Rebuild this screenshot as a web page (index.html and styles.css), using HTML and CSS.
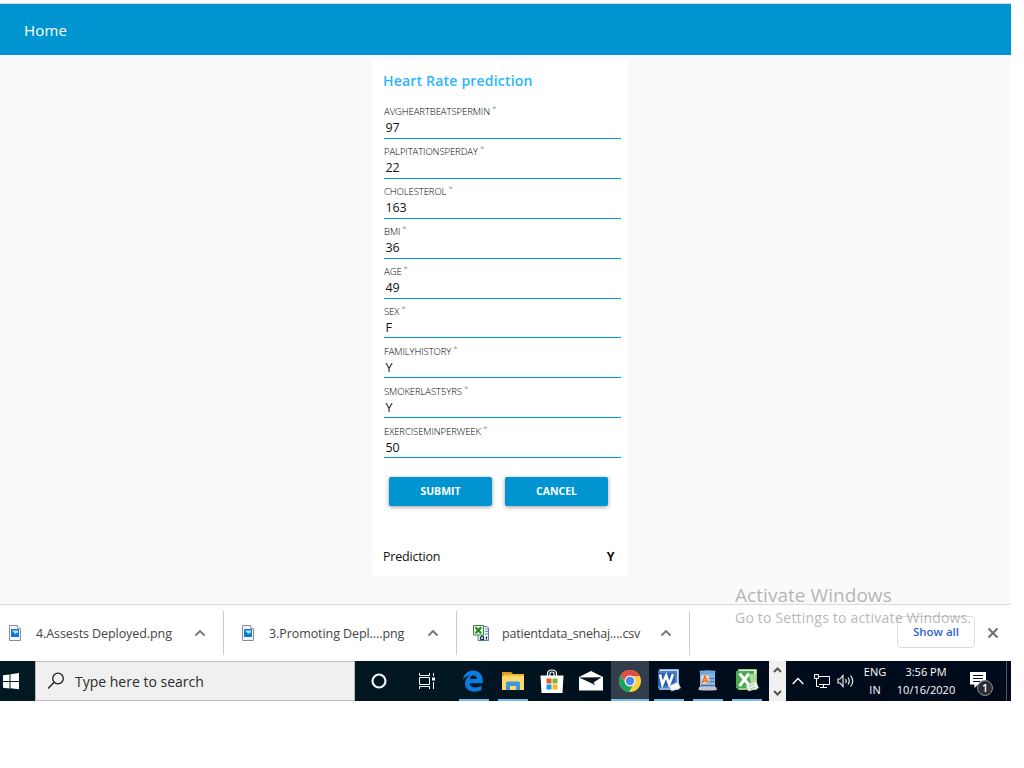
FILE: index.html
```html
<!DOCTYPE html>
<html lang="en">
<head>
<meta charset="utf-8">
<title>Heart Rate prediction</title>
<link rel="stylesheet" href="styles.css">
</head>
<body>
<div class="desktop">
  <header class="topbar"><a class="home">Home</a></header>
  <main class="page">
    <form class="card">
      <h1 class="title">Heart Rate prediction</h1>
      <div class="field"><label class="label">AVGHEARTBEATSPERMIN</label><span class="req">*</span><div class="value">97</div></div>
      <div class="field"><label class="label">PALPITATIONSPERDAY</label><span class="req">*</span><div class="value">22</div></div>
      <div class="field"><label class="label">CHOLESTEROL</label><span class="req">*</span><div class="value">163</div></div>
      <div class="field"><label class="label">BMI</label><span class="req">*</span><div class="value">36</div></div>
      <div class="field"><label class="label">AGE</label><span class="req">*</span><div class="value">49</div></div>
      <div class="field short"><label class="label">SEX</label><span class="req">*</span><div class="value">F</div></div>
      <div class="field short"><label class="label">FAMILYHISTORY</label><span class="req">*</span><div class="value">Y</div></div>
      <div class="field short"><label class="label">SMOKERLAST5YRS</label><span class="req">*</span><div class="value">Y</div></div>
      <div class="field short"><label class="label">EXERCISEMINPERWEEK</label><span class="req">*</span><div class="value">50</div></div>
      <div class="actions"><button type="button" class="btn">SUBMIT</button><button type="button" class="btn">CANCEL</button></div>
      <div class="result"><span class="result-name">Prediction</span><strong class="answer">Y</strong></div>
    </form>
  </main>
  <section class="shelf">
    <div class="download first">
      <svg class="file" width="16" height="18" viewBox="0 0 16 18"><path d="M2.500 1.500h8l3 3v12h-11z" fill="#f4f4f4" stroke="#8d8d8d"/><path d="M10.500 1.500v3h3" fill="#fff" stroke="#a5a5a5"/><path d="M4 5h8v8H4z" fill="#0f7bd8"/><path d="M5 6.500h6v3L9.500 8.500 8.500 10 6.500 8z" fill="#c5e1f8"/></svg>
      <span class="name">4.Assests Deployed.png</span>
      <svg class="chev" width="12" height="8" viewBox="0 0 12 8"><path d="M1.500 6.500L6 2l4.500 4.500" fill="none" stroke="#757575" stroke-width="1.800"/></svg>
    </div>
    <div class="download">
      <svg class="file" width="16" height="18" viewBox="0 0 16 18"><path d="M2.500 1.500h8l3 3v12h-11z" fill="#f4f4f4" stroke="#8d8d8d"/><path d="M10.500 1.500v3h3" fill="#fff" stroke="#a5a5a5"/><path d="M4 5h8v8H4z" fill="#0f7bd8"/><path d="M5 6.500h6v3L9.500 8.500 8.500 10 6.500 8z" fill="#c5e1f8"/></svg>
      <span class="name">3.Promoting Depl....png</span>
      <svg class="chev" width="12" height="8" viewBox="0 0 12 8"><path d="M1.500 6.500L6 2l4.500 4.500" fill="none" stroke="#757575" stroke-width="1.800"/></svg>
    </div>
    <div class="download">
      <svg class="file" width="16" height="17" viewBox="0 0 16 17"><path d="M5 1.500h9l1.500 1.500v12.500H5z" fill="#eef4fb" stroke="#5b7fa6"/><path d="M12 4h3M12 6.500h3M12 9h3" stroke="#6d92b8"/><path d="M.5 .5h10v9.500H.5z" fill="#e9f8e4" stroke="#2f8b2d"/><path d="M2.500 2.200l5.500 6M8.200 2.200l-5.700 6" stroke="#218324" stroke-width="2"/><path d="M7.500 12.500c1.500-2 3-2 3 .3v1.700c-2 .5-3.500 0-3-1.300zM13.500 11.500v3" fill="none" stroke="#17304f" stroke-width="1.300"/></svg>
      <span class="name csv">patientdata_snehaj....csv</span>
      <svg class="chev" width="12" height="8" viewBox="0 0 12 8"><path d="M1.500 6.500L6 2l4.500 4.500" fill="none" stroke="#757575" stroke-width="1.800"/></svg>
    </div>
    <div class="shelf-end">
      <button type="button" class="show-all">Show all</button>
      <svg width="12" height="12" viewBox="0 0 12 12"><path d="M1.500 1.500l9 9M10.500 1.500l-9 9" stroke="#6b6e72" stroke-width="2"/></svg>
    </div>
  </section>
  <footer class="taskbar">
    <div class="start"><svg width="16" height="17" viewBox="0 0 16 17"><path d="M0 2.300l6.500-.9V8H0zM7.500 1.200L16 0v8H7.500zM0 9h6.500v6.500L0 14.700zM7.500 9H16v7.200l-8.500-1z" fill="#fff"/></svg></div>
    <div class="search">
      <svg width="18" height="18" viewBox="0 0 18 18"><circle cx="11" cy="6.500" r="5.300" fill="none" stroke="#222" stroke-width="1.300"/><path d="M7.200 10.300L1 16.500" stroke="#222" stroke-width="1.400"/></svg>
      <span class="search-text">Type here to search</span>
    </div>
    <div class="sys"><svg width="18" height="18" viewBox="0 0 18 18"><circle cx="9" cy="9" r="6.500" fill="none" stroke="#f4f4f4" stroke-width="2.200"/></svg></div>
    <div class="sys"><svg width="18" height="16" viewBox="0 0 18 16"><path d="M1.500 0v2.500h10V0M1.500 16v-2.500h10V16M1.500 4.500h10v7h-10zM15.500 0v3M15.500 9v7" fill="none" stroke="#fff"/><path d="M14 4.500h3v3h-3z" fill="#fff"/></svg></div>
    <div class="apps">
      <div class="app open"><svg class="edge" width="20" height="22" viewBox="0 0 20 22"><path d="M0 10C.6 4.500 4.400.5 10 .5c5.800 0 9.800 4 9.800 9.800v2.900H6.800c.2 2.900 2.700 4.200 5.700 4.200 2.300 0 4.200-.6 6-1.700v4.400c-1.900 1-4.200 1.600-6.900 1.600C5.800 21.700 2 18.500 2 13.500c0-3.500 1.800-6.300 5-7.900C4 5.800 1.500 7.300 0 10zm6.900-.9h7c0-2.400-1-3.700-3.300-3.700-2.100 0-3.400 1.500-3.700 3.700z" fill="#0b7cdd"/></svg></div>
      <div class="app open"><svg width="22" height="19" viewBox="0 0 22 19"><path d="M0 0h9l2 2h11v16H0z" fill="#f3b72f"/><path d="M0 0h9l1 2H2v3H0z" fill="#d99a14"/><path d="M0 4h22v14H0z" fill="#ffd96c"/><path d="M4 18v-7q0-1.500 1.500-1.500h11q1.500 0 1.500 1.500v7h-4v-4H8v4z" fill="#3c97dd"/></svg></div>
      <div class="app"><svg width="24" height="25" viewBox="0 0 24 25"><path d="M7.500 8V5Q7.500 1 12 1t4.500 4v3M10 7V4.500Q10 3 12 3t2 1.500V7" fill="none" stroke="#fff" stroke-width="1.200"/><path d="M.5 6.500h23L22.500 24h-21z" fill="#fff"/><path d="M6.500 9.500h5v5h-5z" fill="#ee5126"/><path d="M12.500 9.500h5v5h-5z" fill="#7cb72c"/><path d="M6.500 15.500h5v5h-5z" fill="#16a0e4"/><path d="M12.500 15.500h5v5h-5z" fill="#fbb61a"/></svg></div>
      <div class="app"><svg width="24" height="20" viewBox="0 0 24 20"><path d="M0 6L12 0l12 6v13.500H0z" fill="#fff"/><path d="M0 6.500l22.500-.2-8 5.200 2 2.800-5.500-2.800z" fill="#031622"/></svg></div>
      <div class="app open active"><svg width="24" height="24" viewBox="0 0 24 24"><circle cx="12" cy="12" r="11" fill="#ffcd40"/><path d="M2.470 6.500A11 11 0 0 0 11 22.950l4.800-8.400L12 12l-4.500 2z" fill="#18a15f"/><path d="M2.470 6.500A11 11 0 0 1 21.800 7H12L8 14z" fill="#dd4f42"/><circle cx="12" cy="12" r="5.500" fill="#f3f3f3"/><circle cx="12" cy="12" r="4.200" fill="#4a86ec"/></svg></div>
      <div class="app open"><svg width="24" height="24" viewBox="0 0 24 24"><path d="M2.500 .5h19v20h-19z" fill="#c6daf2" stroke="#8eb2dc"/><path d="M1 2h19v17.500H1z" fill="#4a80ca"/><path d="M1 4h17v13H1z" fill="#2c62b0"/><path d="M3 5.500l2.400 10L9.200 6.500l3 9L16 5" fill="none" stroke="#fff" stroke-width="2.500"/><path d="M12 17l9-4 2.500 6-9 3z" fill="#f5f7fb" stroke="#b6cbe5" stroke-width=".7"/></svg></div>
      <div class="app open"><svg width="20" height="22" viewBox="0 0 20 22"><path d="M1.500 .8q8-1 16 0L17 4v13H2V4z" fill="#6fa5dc"/><path d="M2 4h15v13H2z" fill="#8db5e2"/><path d="M12 8.500h4M12 11.500h4M3 15.500h13" stroke="#3f6ca5"/><path d="M1 17h17l1 3q-9 1-18.500 0z" fill="#c3c5c9"/><path d="M3.500 5.500h7v8h-7z" fill="#f3dfcf"/><path d="M4.200 13L7 6.500 9.800 13M5.500 11h3" fill="none" stroke="#ed711c" stroke-width="1.700"/></svg></div>
      <div class="app open"><svg width="24" height="24" viewBox="0 0 24 24"><path d="M3.500 .5h18v20h-18z" fill="#dff2d8" stroke="#92ca86"/><path d="M1 2h18v17.500H1z" fill="#4ba952"/><path d="M4.500 4.500L15 17M14 4.500L4.500 17" stroke="#fff" stroke-width="3"/><path d="M14 5h7v10h-5z" fill="#a8d999"/><path d="M11 16.500l10-4 2.500 6.500-10 3z" fill="#f4f9f2" stroke="#bad9b3" stroke-width=".7"/><path d="M13.500 17.500l6-2M14.500 20l6-2" stroke="#9bc392"/></svg></div>
    </div>
    <div class="scroller"><svg width="17" height="40" viewBox="0 0 17 40"><path d="M5 11l3.500-3.500L12 11M5 30l3.500 3.500L12 30" fill="none" stroke="#555" stroke-width="2"/></svg></div>
    <div class="tray">
      <svg class="up" width="12" height="8" viewBox="0 0 12 8"><path d="M.7 7L6 1.500 11.300 7" fill="none" stroke="#fff" stroke-width="1.300"/></svg>
      <svg class="net" width="17" height="14" viewBox="0 0 17 14"><path d="M5 2.500h10.500v8H5M6 13.500h7M9.500 10.500v3M2.500 4.500v8H5" fill="none" stroke="#fff"/><path d="M.5 .5h4v4h-4z" fill="#17202c" stroke="#fff"/></svg>
      <svg class="vol" width="18" height="14" viewBox="0 0 18 14"><path d="M1 5h2l3-3.500v11L3 9H1zM8.500 5q1.500 2 0 4M11 3.500q2.500 3.500 0 7M13.500 1.500q4.500 5.500 0 11" fill="none" stroke="#fff" stroke-width="1.100"/></svg>
      <div class="lang"><span>ENG</span><span>IN</span></div>
      <div class="clock"><span>3:56 PM</span><span>10/16/2020</span></div>
      <div class="notice"><svg width="18" height="18" viewBox="0 0 18 18"><path d="M0 0h16v12.500H8L4.500 16v-3.500H0z" fill="#fff"/><path d="M3 3.500h10M3 6.500h10M3 9.500h7" stroke="#07101d" stroke-width="1.100"/></svg><span class="badge">1</span></div>
      <div class="peek"></div>
    </div>
  </footer>
  <aside class="watermark"><div class="w1">Activate Windows</div><div class="w2">Go to Settings to activate Windows.</div></aside>
</div>
</body>
</html>
```
FILE: styles.css
```css
* { box-sizing: border-box; }
body { margin: 0; background: #fff; font-family: "Open Sans", "Noto Sans", sans-serif; color: #111; }
svg { display: block; flex: none; }
.desktop { position: relative; width: 1011px; height: 701px; padding-top: 3px; display: flex; flex-direction: column; overflow: hidden; }
.topbar { height: 52px; flex: none; background: #0094d0; border-top: 1px solid #cbdce4; padding: 0 24px; display: flex; align-items: center; }
.home { color: #fff; font-size: 15px; letter-spacing: .2px; line-height: 20px; padding-top: 1px; }
.page { height: 549px; flex: none; background: #fafafa; padding-top: 5px; }
.card { width: 256px; height: 516px; margin-left: 372px; background: #fff; padding: 11px 7px 0 11px; }
.title { margin: 0 0 13px; height: 20px; line-height: 20px; font-size: 14px; font-weight: 600; letter-spacing: .2px; color: #29b6ff; white-space: nowrap; }
.field { height: 40px; width: 237px; margin-left: 1px; display: grid; grid-template-columns: max-content 1fr; grid-template-rows: 14px 21px; white-space: nowrap; }
.field.short { grid-template-rows: 14px 20px; }
.label { font-size: 9.500px; line-height: 16px; font-weight: 300; color: #000; letter-spacing: -.08px; }
.req { font-size: 8px; line-height: 11px; color: #999; padding-left: 2px; margin-top: -2px; }
.value { grid-column: 1 / 3; border-bottom: 1px solid #0094d0; font-size: 12.500px; line-height: 19px; padding-left: 1.500px; letter-spacing: -.1px; color: #111; }
.actions { display: flex; gap: 13px; padding: 13px 0 0 6px; }
.btn { width: 103px; height: 29px; padding: 0; border: 0; border-radius: 2px; background: #0094d0; color: #fff; font: 700 10.500px/29px "Open Sans", sans-serif; box-shadow: 0 1px 4px rgba(0, 0, 0, .4); }
.result { display: flex; justify-content: space-between; height: 20px; margin-top: 41px; line-height: 20px; font-size: 12.500px; padding-right: 6.500px; }
.result-name { letter-spacing: -.2px; }
.answer { font-weight: 700; }
.shelf { height: 57px; flex: none; border-top: 1px solid #d9dadd; display: flex; align-items: center; background: #fff; }
.download { width: 233px; height: 44px; border-right: 1px solid #ccc; display: flex; align-items: center; padding-left: 16px; white-space: nowrap; }
.download.first { width: 224px; padding-left: 7px; }
.name { width: 158px; margin-left: 13px; padding-top: 1px; font-size: 12.500px; line-height: 20px; letter-spacing: -.08px; color: #454545; }
.name.csv { letter-spacing: -.18px; }
.chev { flex: none; }
.shelf-end { flex: 1; display: flex; align-items: center; justify-content: flex-end; gap: 12px; padding-right: 12px; }
.show-all { width: 78px; height: 32px; margin-top: -2px; border: 1px solid #d9dce0; border-radius: 4px; background: #fff; color: #2b66d9; font: 600 11.500px/28px "Open Sans", sans-serif; padding: 0; }
.taskbar { height: 40px; flex: none; display: flex; background: linear-gradient(90deg, #001923 0, #001722 45%, #000d1c 65%, #000a1b 100%); }
.start { width: 35px; display: flex; align-items: center; padding-left: 3px; }
.search { width: 320px; background: #f0f0f0; border: 1px solid #bcbcbc; display: flex; align-items: center; gap: 10px; padding-left: 11px; color: #2b2b2b; }
.search-text { font-size: 14px; line-height: 20px; padding-top: 2px; white-space: nowrap; }
.sys { width: 48px; display: flex; align-items: center; justify-content: center; }
.apps { display: flex; width: 318px; padding-left: 3px; }
.app { width: 39px; flex: none; display: flex; align-items: center; justify-content: center; position: relative; }
.app.open::after { content: ""; position: absolute; left: 5px; bottom: 0; width: 30px; height: 2px; background: #76b9ed; }
.edge { margin-right: 1px; }
.app.active { background: #323e4b; margin-left: 1px; width: 38px; }
.app.active::after { left: 0; width: 38px; }
.scroller { width: 17px; background: #f0f0f0; flex: none; }
.tray { flex: 1; display: flex; align-items: center; color: #fff; font-size: 11px; line-height: 18px; white-space: nowrap; }
.up { margin-left: 6px; }
.net { margin-left: 10px; }
.vol { margin-left: 6px; }
.lang, .clock { display: flex; flex-direction: column; align-items: center; }
.lang { width: 26px; margin-left: 7px; }
.clock { width: 64px; margin-left: 6px; }
.notice { position: relative; margin-left: 12px; }
.badge { position: absolute; left: 7px; top: 8px; width: 16px; height: 16px; border: 1px solid #8c9299; border-radius: 50%; background: #2c3036; font-size: 10.500px; font-weight: 600; line-height: 14px; text-align: center; }
.peek { width: 1px; height: 40px; background: #4f5764; margin-left: auto; margin-right: 4px; }
.watermark { position: absolute; left: 735px; top: 583px; color: rgba(110, 110, 110, .5); white-space: nowrap; }
.w1 { font-size: 19px; line-height: 25px; letter-spacing: .05px; }
.w2 { font-size: 14px; line-height: 20px; letter-spacing: .2px; }
```
